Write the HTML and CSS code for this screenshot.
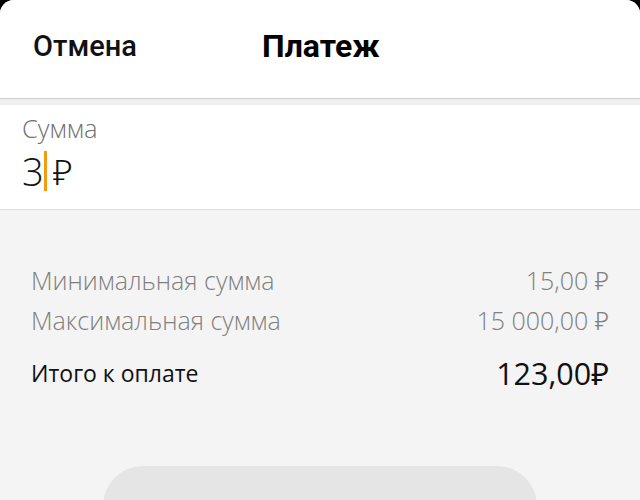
FILE: index.html
```html
<!DOCTYPE html>
<html lang="ru">
<head>
    <meta charset="UTF-8">
    <meta name="viewport" content="width=device-width, initial-scale=1.0">
    <title>Платеж</title>
    <link rel="stylesheet" href="styles.css">
</head>
<body>
    <div class="sheet">
        <header class="topbar">
            <span class="cancel">Отмена</span>
            <h1 class="title">Платеж</h1>
        </header>

        <div class="gap"></div>

        <section class="amount">
            <div class="amount-label">Сумма</div>
            <div class="amount-value">
                <span class="digits">3</span><span class="caret"></span><span class="rub">₽</span>
            </div>
        </section>

        <section class="details">
            <div class="row muted">
                <span>Минимальная сумма</span>
                <span>15,00 ₽</span>
            </div>
            <div class="row muted">
                <span>Максимальная сумма</span>
                <span>15 000,00 ₽</span>
            </div>
            <div class="row total">
                <span>Итого к оплате</span>
                <span class="total-sum">123,00₽</span>
            </div>

            <button class="pay" type="button"></button>
        </section>
    </div>
</body>
</html>
```

FILE: styles.css
```css
body {
    margin: 0;
    padding: 0;
    background-color: #000;
    font-family: "Open Sans", "Noto Sans", sans-serif;
    overflow: hidden;
}
.sheet {
    height: 500px;
    background-color: #f4f4f4;
    border-radius: 14px 14px 0 0;
    overflow: hidden;
}
.topbar {
    height: 99px;
    background-color: #fff;
    border-bottom: 1px solid #cfcfcf;
    display: flex;
    align-items: center;
    padding-bottom: 6px;
    box-sizing: border-box;
}
.cancel {
    margin-left: 33px;
    width: 229px;
    font-family: Roboto, sans-serif;
    font-weight: 500;
    font-size: 29px;
    color: #111;
}
.title {
    margin: 0;
    font-family: Roboto, sans-serif;
    font-weight: 700;
    font-size: 32px;
    color: #000;
}
.gap {
    height: 6px;
    background-color: #efefef;
}
.amount {
    background-color: #fff;
    border-bottom: 1px solid #dedede;
    height: 105px;
    box-sizing: border-box;
    padding: 9px 22px 0;
}
.amount-label {
    font-size: 25.5px;
    font-weight: 300;
    color: #707070;
    line-height: 28px;
}
.amount-value {
    display: flex;
    align-items: center;
    height: 46px;
    margin-top: 6px;
}
.digits {
    font-size: 38px;
    font-weight: 300;
    color: #111;
}
.caret {
    width: 3px;
    height: 40px;
    background-color: #f39c12;
    margin: 0 6px 0 0;
}
.rub {
    font-size: 35px;
    font-weight: 300;
    color: #111;
}
.details {
    padding: 50px 31px 0;
    display: flex;
    flex-direction: column;
}
.row {
    display: flex;
    justify-content: space-between;
    align-items: center;
    height: 40px;
    font-size: 25px;
    font-weight: 300;
}
.muted {
    color: #808080;
}
.total {
    margin-top: 13px;
    color: #111;
    font-weight: 400;
    font-size: 23px;
}
.total-sum {
    font-size: 30.5px;
    font-weight: 400;
}
.pay {
    align-self: center;
    margin-top: 73px;
    width: 434px;
    height: 80px;
    border: none;
    border-radius: 40px;
    background-color: #e5e5e5;
}
```
